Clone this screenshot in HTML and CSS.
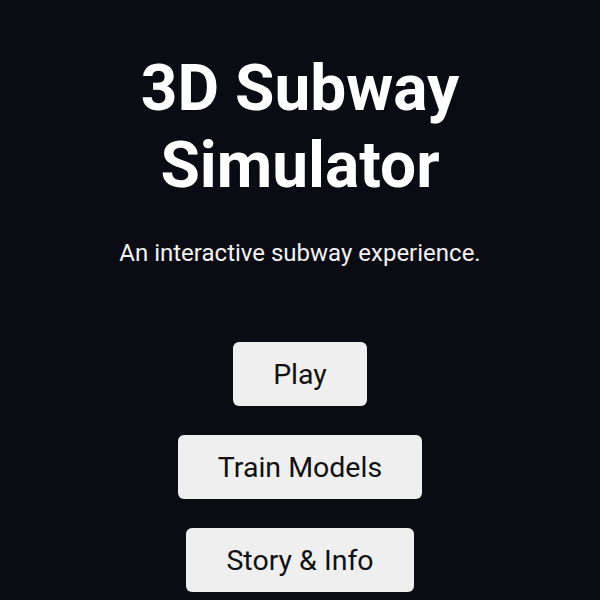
FILE: index.html
```html
<!DOCTYPE html>
<html lang="en">
<head>
<meta charset="utf-8">
<title>3D Subway Simulator</title>
<link rel="stylesheet" href="styles.css">
</head>
<body>
<main class="menu">
  <h1 class="title">3D Subway Simulator</h1>
  <p class="tagline">An interactive subway experience.</p>
  <nav class="actions">
    <button class="btn">Play</button>
    <button class="btn">Train Models</button>
    <button class="btn">Story &amp; Info</button>
  </nav>
</main>
</body>
</html>
```
FILE: styles.css
```css
html, body {
  margin: 0;
  padding: 0;
  background: #0b0b14;
  color: #ffffff;
  font-family: Roboto, "Liberation Sans", sans-serif;
}

.menu {
  display: flex;
  flex-direction: column;
  align-items: center;
  padding-top: 50px;
}

.title {
  margin: 0;
  width: 380px;
  text-align: center;
  font-size: 64px;
  font-weight: 700;
  line-height: 77px;
}

.tagline {
  margin: 34px 0 0;
  font-size: 24px;
  line-height: 30px;
  color: #f2f2f2;
}

.actions {
  display: flex;
  flex-direction: column;
  align-items: center;
  gap: 29px;
  margin-top: 74px;
}

.btn {
  height: 64px;
  padding: 0 40px;
  border: none;
  border-radius: 6px;
  background: #efefef;
  color: #111111;
  font-family: Roboto, "Liberation Sans", sans-serif;
  font-size: 28.5px;
}
```
